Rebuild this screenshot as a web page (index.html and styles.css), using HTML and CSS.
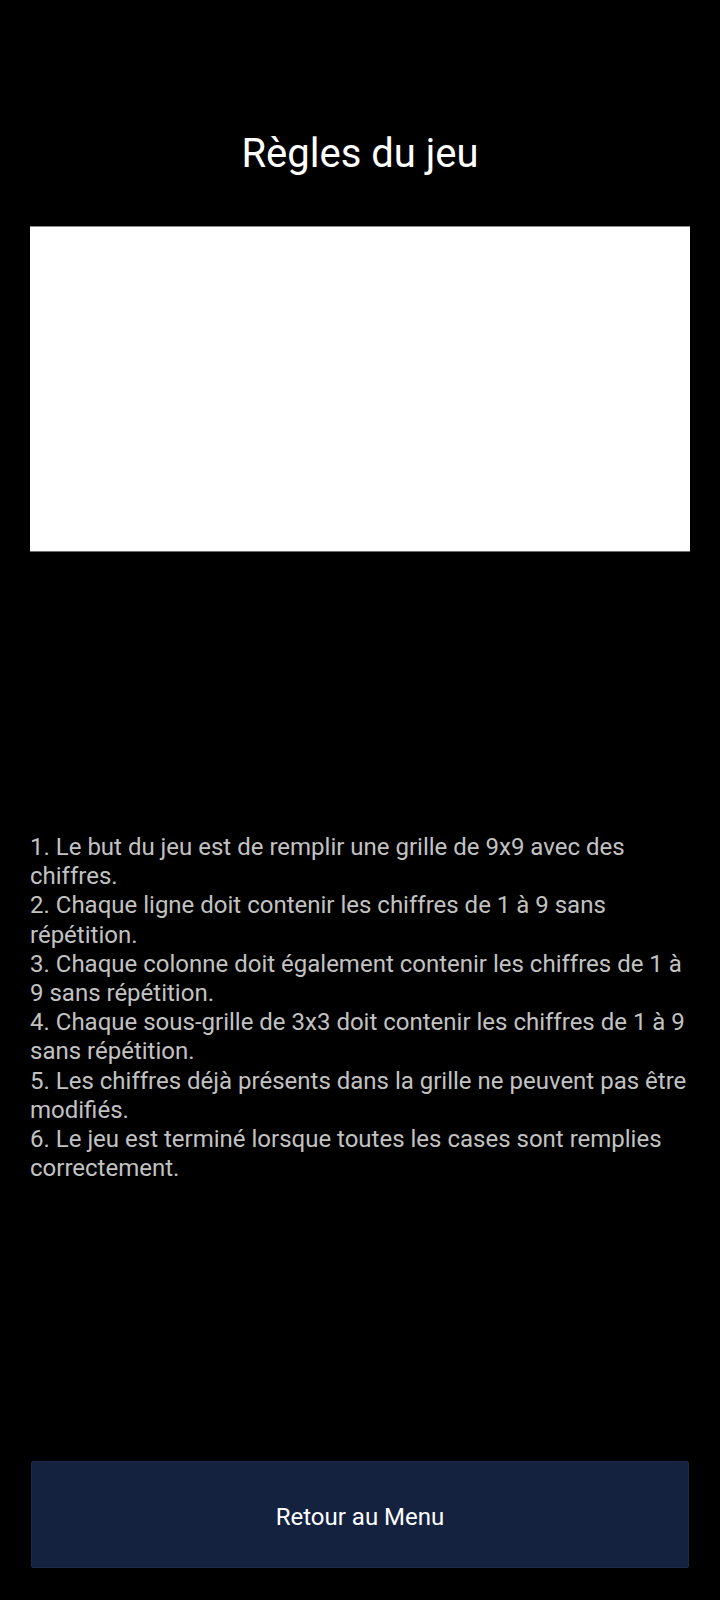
FILE: index.html
```html
<!DOCTYPE html>
<html lang="fr">
<head>
<meta charset="utf-8">
<title>Règles du jeu</title>
<link rel="stylesheet" href="styles.css">
</head>
<body>
<div class="page">
  <h1 class="title">Règles du jeu</h1>
  <div class="webview"></div>
  <div class="rules">
    <p>1. Le but du jeu est de remplir une grille de 9x9 avec des chiffres.</p>
    <p>2. Chaque ligne doit contenir les chiffres de 1 à 9 sans répétition.</p>
    <p>3. Chaque colonne doit également contenir les chiffres de 1 à 9 sans répétition.</p>
    <p>4. Chaque sous-grille de 3x3 doit contenir les chiffres de 1 à 9 sans répétition.</p>
    <p>5. Les chiffres déjà présents dans la grille ne peuvent pas être modifiés.</p>
    <p>6. Le jeu est terminé lorsque toutes les cases sont remplies correctement.</p>
  </div>
  <div class="spacer"></div>
  <button class="back-btn">Retour au Menu</button>
</div>
</body>
</html>
```

FILE: styles.css
```css
html, body {
  margin: 0;
  padding: 0;
  background: #000;
}
.page {
  height: 1600px;
  display: flex;
  flex-direction: column;
  font-family: Roboto, "Noto Sans", sans-serif;
}
.title {
  margin: 0;
  padding-top: 130px;
  font-size: 40px;
  line-height: 48px;
  font-weight: 400;
  color: #fff;
  text-align: center;
}
.webview {
  margin: 48px 30px 0;
  height: 324px;
  background: #fff;
  border-top: 1px solid #8a8a8a;
  border-bottom: 1px solid #6e6e6e;
}
.rules {
  margin: 281px 30px 0;
  color: #c2c2c2;
  font-size: 24px;
  line-height: 29.2px;
}
.rules p {
  margin: 0;
}
.spacer {
  flex: 1;
}
.back-btn {
  margin: 0 31px 32px;
  height: 107px;
  padding: 4px 0 0;
  background: #14223f;
  border: 1px solid #1e2c4a;
  border-radius: 2px;
  color: #fff;
  font-family: Roboto, "Noto Sans", sans-serif;
  font-size: 24px;
  line-height: 28px;
}
```
